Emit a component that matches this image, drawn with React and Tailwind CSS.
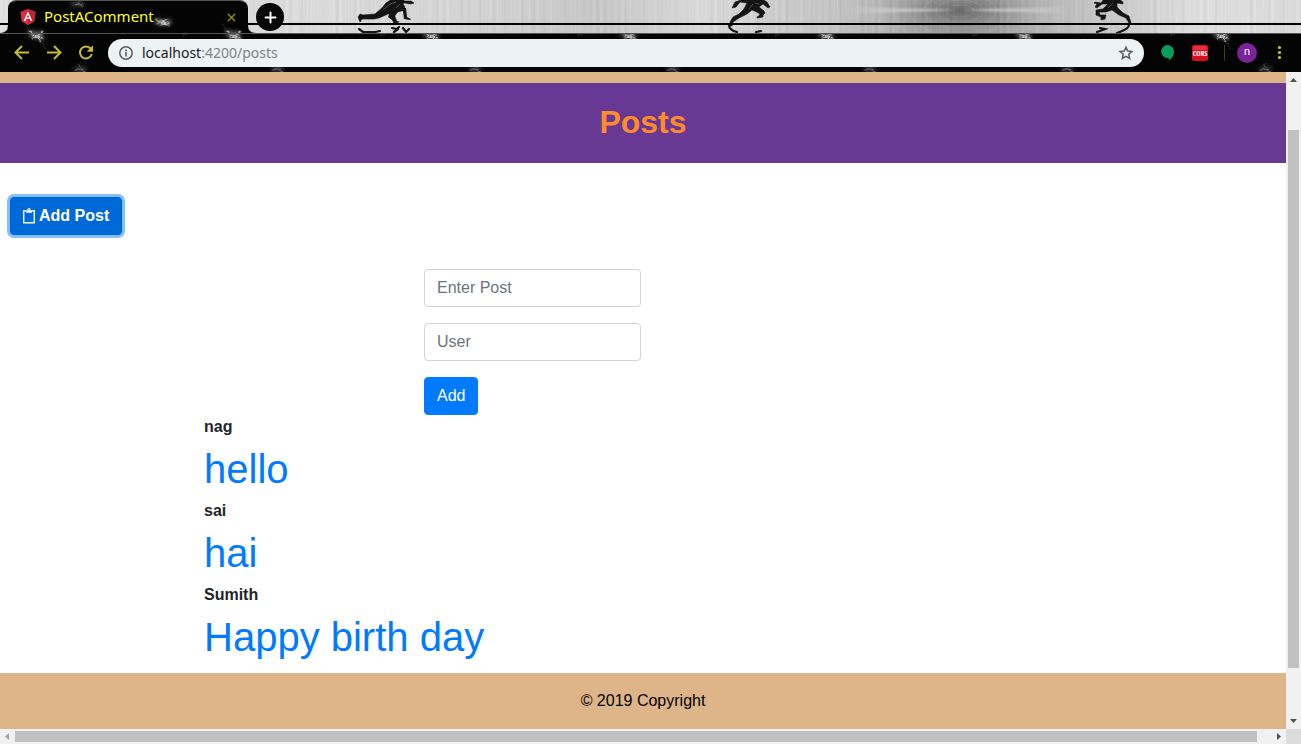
import React, { useState } from "react";
import { Plus, X } from "lucide-react";

const posts = [
  { user: "nag", text: "hello" },
  { user: "sai", text: "hai" },
  { user: "Sumith", text: "Happy birth day" },
];

function BrushedMetal() {
  return (
    <svg className="absolute inset-0 h-full w-full" viewBox="0 0 1301 33" preserveAspectRatio="xMinYMin slice" aria-hidden="true">
      <defs>
        <linearGradient id="metal" x1="0" x2="1">
          <stop offset="0" stopColor="#e2e2e2" />
          <stop offset="0.24" stopColor="#dcdcdc" />
          <stop offset="0.35" stopColor="#d4d4d4" />
          <stop offset="0.46" stopColor="#c4c4c4" />
          <stop offset="0.54" stopColor="#dadada" />
          <stop offset="0.65" stopColor="#bcbcbc" />
          <stop offset="0.74" stopColor="#8c8c8c" />
          <stop offset="0.83" stopColor="#bcbcbc" />
          <stop offset="0.92" stopColor="#e0e0e0" />
          <stop offset="1" stopColor="#dcdcdc" />
        </linearGradient>
        <radialGradient id="hub">
          <stop offset="0" stopColor="#4c4c4c" />
          <stop offset="0.3" stopColor="#686868" stopOpacity="0.9" />
          <stop offset="1" stopColor="#909090" stopOpacity="0" />
        </radialGradient>
        <linearGradient id="shineL" x1="0" x2="1">
          <stop offset="0" stopColor="#fff" stopOpacity="0" />
          <stop offset="1" stopColor="#fff" stopOpacity="0.8" />
        </linearGradient>
        <linearGradient id="shineR" x1="1" x2="0">
          <stop offset="0" stopColor="#fff" stopOpacity="0" />
          <stop offset="1" stopColor="#fff" stopOpacity="0.8" />
        </linearGradient>
        <filter id="grain" x="0" y="0" width="100%" height="100%">
          <feTurbulence type="fractalNoise" baseFrequency="0.28 0.001" numOctaves="2" seed="4" />
          <feColorMatrix values="1 0 0 0 0.15  1 0 0 0 0.15  1 0 0 0 0.15  0 0 0 0 0.2" />
        </filter>
        <filter id="soften" x="-10%" y="-100%" width="120%" height="300%">
          <feGaussianBlur stdDeviation="1.2" />
        </filter>
      </defs>
      <rect width="1301" height="33" fill="url(#metal)" />
      <ellipse cx="960" cy="11" rx="85" ry="28" fill="url(#hub)" />
      <g fill="none" stroke="#fff" strokeOpacity="0.1">
        <ellipse cx="960" cy="11" rx="14" ry="6" />
        <ellipse cx="960" cy="11" rx="24" ry="11" />
        <ellipse cx="960" cy="11" rx="36" ry="17" />
        <ellipse cx="960" cy="11" rx="50" ry="25" />
        <ellipse cx="960" cy="11" rx="66" ry="36" />
        <ellipse cx="960" cy="11" rx="84" ry="50" />
        <ellipse cx="960" cy="11" rx="104" ry="68" />
        <ellipse cx="960" cy="11" rx="126" ry="90" />
      </g>
      <rect width="1301" height="33" filter="url(#grain)" />
      <path d="M850 7L958 10 850 14z" fill="url(#shineL)" filter="url(#soften)" />
      <path d="M1070 7L962 10 1070 14z" fill="url(#shineR)" filter="url(#soften)" />
      <g stroke="#141414" fill="#141414" strokeWidth="0.6" strokeLinejoin="round">
        <path d="M358 17l2-3 3 1 12-1 7-6 4-5 6-4h12l-1 5 2 3-5 4-6 2-6 1-9 4-5 1-12 0-2 3z" />
        <path d="M390 8l6 1 6 1-1-3 5 1 1 9 4 2-1 1-6-1-1-8-5 1-3 4 2 5 3 1-6 2-2-4-4-3 2-5z" stroke="none" />
        <path d="M396 0l9 1h6l3 2-3 1-6-1-6 1z" />
        <path d="M744-1h18l5 3 3 5-2 1-5-4-4 3 5 4 1 2-2 2v2l-6 1 0-1 3-2-1-2-7-3-5 4-8 4-6 4-1 4h-2l0-4 3-5 6-3 5-5 3-6-7-1-4 5-4 1 3-6z" />
        <path d="M1104-1h15l4 3 0 2-6-1 0 4 6 6 6 3 2 7h-2l-3-5-7-3-7-5-6 2-7 0 1 3 6 0-1 4-4 1 0-3-5-2 0-5 7-1 5-5-6 0-5 4-2-1 2-3-3-1 1-1 6 1z" />
      </g>
      <g fill="none" stroke="#c9c9c9" strokeWidth="0.6" opacity="0.55">
        <path d="M383 10l7-6 6-2M396 8l4-4M749 9l4-5M755 3l4 1M1108 8l5-5" />
      </g>
      <g fill="none" stroke="#161616" strokeWidth="2.200" strokeLinecap="round">
        <path d="M359 29l4 3h12l5-1M392 28l5 1 2-2M394 32l4-3M403 28l3 4 3-3" />
        <path d="M729 25q0 5 8 7M756 32l5-1" />
        <path d="M1100 28l5 1-8 3M1129 25q0 4-12 8" />
      </g>
      <path d="M0 24h1301" stroke="#000" strokeWidth="2" />
    </svg>
  );
}

function StormTexture() {
  return (
    <svg className="absolute inset-0 h-full w-full" aria-hidden="true">
      <defs>
        <filter id="glow" x="-40%" y="-40%" width="180%" height="180%">
          <feGaussianBlur stdDeviation="2" />
        </filter>
        <filter id="rough" x="-20%" y="-20%" width="140%" height="140%">
          <feTurbulence type="fractalNoise" baseFrequency="0.3" numOctaves="3" seed="8" />
          <feDisplacementMap in="SourceGraphic" scale="5" xChannelSelector="R" yChannelSelector="G" />
          <feGaussianBlur stdDeviation="0.4" />
        </filter>
        <pattern id="storm" width="197.500" height="72" patternUnits="userSpaceOnUse">
          <rect width="198" height="72" fill="#040404" />
          <g fill="none" stroke="#fff" strokeLinecap="round">
            <g filter="url(#glow)" strokeWidth="5">
              <path d="M31 34l5 2 4-1 1 3M157 22l6 2 6-1" opacity="0.45" />
              <path d="M73 5h8M76 70l8-1" opacity="0.22" />
            </g>
            <g filter="url(#rough)" strokeWidth="1.2">
              <path d="M29 32l4 3 5 1 3-1 2-3M34 36l4 2 3 3M32 38l6-1 4 1M156 20l4 3 6-2M157 24l7 0 5 3M162 21l4 4 4-1M160 26l5-1" opacity="0.65" />
              <path d="M74 6l6-1 3 2M78 5l1-3M76 70l5-1 5 2M79 69l1-4" opacity="0.3" />
              <path d="M28 31l-2-6M41 42l4 6M101 11l5 3M122 65l4-2M183 36l3-2M142 52l4 3" opacity="0.13" />
            </g>
          </g>
        </pattern>
      </defs>
      <rect width="100%" height="100%" fill="url(#storm)" />
    </svg>
  );
}

function ChromeTab() {
  return (
    <div className="relative ml-2 h-[33px] w-60 shrink-0">
      <div className="relative flex h-full items-center overflow-hidden rounded-t-lg border-t border-[#555] pl-3 pr-2.5">
        <div className="absolute -left-2 -top-0.5 h-[72px] w-[260px]"><StormTexture /></div>
        <svg className="relative h-4 w-4 shrink-0" viewBox="0 0 16 16" aria-hidden="true">
          <path d="M8 0l7.500 2.700-1.200 9.700L8 16l-6.300-3.600L.5 2.700z" fill="#dd2c3e" />
          <path d="M8 0l7.500 2.700-1.200 9.700L8 16z" fill="#bd2636" />
          <path d="M8 2.300L3.700 12h1.700l.9-2.200h3.500l.9 2.200h1.600zm0 3.200l1.300 3H6.700z" fill="#fff" />
        </svg>
        <span className="relative ml-2 flex-1 whitespace-nowrap pb-0.5 font-['Noto_Sans',sans-serif] text-[15px] leading-5 text-[#ffff28]">PostAComment</span>
        <button aria-label="Close tab" className="relative text-[#938d20]"><X size={13} strokeWidth={2.6} /></button>
      </div>
      <svg className="absolute -left-2 bottom-0 h-2 w-2" viewBox="0 0 8 8" aria-hidden="true"><path d="M8 0v8H0q8 0 8-8" fill="#080808" /></svg>
      <svg className="absolute -right-2 bottom-0 h-2 w-2" viewBox="0 0 8 8" aria-hidden="true"><path d="M0 0v8h8Q0 8 0 0" fill="#080808" /></svg>
    </div>
  );
}

function BrowserChrome() {
  return (
    <header className="shrink-0 bg-black">
      <div className="relative flex h-[33px] overflow-hidden">
        <BrushedMetal />
        <ChromeTab />
        <button aria-label="New tab" className="relative ml-2 mt-[3px] flex h-7 w-7 items-center justify-center rounded-full bg-[#080808] text-white">
          <Plus size={17} strokeWidth={2.8} />
        </button>
      </div>
      <div className="relative h-[39px] overflow-hidden border-t border-[#555]">
        <div className="absolute inset-x-0 -top-[34px] h-[72px]"><StormTexture /></div>
        <div className="relative flex h-full items-center">
          <nav className="flex w-[108px] shrink-0 items-center gap-4 pl-3.5 text-[#c4bc2e]">
            <button aria-label="Back">
              <svg className="h-4 w-4" viewBox="0 0 16 16" fill="none" stroke="currentColor" strokeWidth="2"><path d="M15 7.500H2M8 1L1.500 7.500 8 14" /></svg>
            </button>
            <button aria-label="Forward">
              <svg className="h-4 w-4" viewBox="0 0 16 16" fill="none" stroke="currentColor" strokeWidth="2"><path d="M1 7.500h13M8 1l6.500 6.500L8 14" /></svg>
            </button>
            <button aria-label="Reload">
              <svg className="h-4 w-4" viewBox="0 0 16 16"><path d="M12.700 3.700A6 6 0 1 0 13.800 9" fill="none" stroke="currentColor" strokeWidth="2" /><path d="M15 .3v6.500H8.700z" fill="currentColor" /></svg>
            </button>
          </nav>
          <div className="flex h-7 min-w-0 flex-1 items-center rounded-full bg-[#edf2f4] pl-2.5 pr-2.5">
            <svg className="h-4 w-4 shrink-0" viewBox="0 0 16 16" aria-hidden="true">
              <circle cx="8" cy="8" r="6.200" fill="none" stroke="#5a5f63" strokeWidth="1.500" />
              <path d="M8 7v4.500M8 4.500V6" stroke="#5a5f63" strokeWidth="1.600" />
            </svg>
            <span className="ml-2 flex-1 font-['Noto_Sans',sans-serif] text-sm leading-5 text-[#7e8386]"><span className="text-[#202124]">localhost</span>:4200/posts</span>
            <button aria-label="Bookmark this page">
              <svg className="h-4 w-4" viewBox="0 0 16 16" fill="none" stroke="#5a5f63" strokeWidth="1.500"><path d="M8 2.200l1.700 3.900 4.200.4-3.200 2.800 1 4.200L8 11.300l-3.700 2.200 1-4.200-3.200-2.800 4.200-.4z" /></svg>
            </button>
          </div>
          <div className="flex shrink-0 items-center pl-4 pr-3">
            <svg className="h-4 w-4" viewBox="0 0 16 16" aria-hidden="true"><path d="M7.500 0a6.500 6.500 0 0 1 6.500 6.500c0 4-2.300 7-5.200 9v-2.600A6.500 6.500 0 1 1 7.500 0" fill="#0a9d58" /></svg>
            <svg className="ml-4 h-4 w-4" viewBox="0 0 16 16" role="img" aria-label="CORS">
              <rect width="16" height="16" rx="2.500" fill="#d90f20" />
              <rect x="1" y="1" width="14" height="4" rx="1.500" fill="#e8303c" />
              <text x="8" y="11" textAnchor="middle" fontFamily="Open Sans Condensed, Liberation Sans Narrow, sans-serif" fontSize="7.500" fontWeight="700" fill="#fff">CORS</text>
            </svg>
            <span className="ml-2 h-4 w-[9px] border-r border-[#453d10]" />
            <button aria-label="Profile" className="ml-3 flex h-5 w-5 items-center justify-center rounded-full bg-[#7b239b] pb-0.5 font-['Roboto',sans-serif] text-[11px] leading-4 text-white">n</button>
            <button aria-label="Browser menu" className="ml-4">
              <svg className="h-4 w-4" viewBox="0 0 16 16" fill="#cdc42f"><circle cx="6.500" cy="2.500" r="1.600" /><circle cx="6.500" cy="7.500" r="1.600" /><circle cx="6.500" cy="12.500" r="1.600" /></svg>
            </button>
          </div>
        </div>
      </div>
    </header>
  );
}

function Page() {
  const [post, setPost] = useState("");
  const [user, setUser] = useState("");
  const field = "h-[38px] w-[217px] rounded border border-[#ced4da] bg-white px-3 text-base text-[#495057] placeholder:text-[#6c757d] placeholder:opacity-100 outline-none";
  return (
    <div className="flex min-w-0 flex-1 flex-col bg-white font-['Liberation_Sans',Arial,sans-serif] text-base text-[#212529]">
      <div className="h-[11px] bg-[#deb589]" />
      <div className="flex h-20 items-center justify-center bg-[#673894] pb-0.5">
        <h1 className="text-[32px] font-bold leading-10 text-[#ff8a2c]">Posts</h1>
      </div>
      <main className="flex-1 pt-[34px]">
        <button className="ml-2.5 flex h-[38px] items-center gap-1 rounded border border-[#0062cc] bg-[#0069d9] pl-3 pr-3 font-bold text-white ring-3 ring-[#80c0ff]">
          <svg className="h-4 w-3" viewBox="0 0 12 16" aria-hidden="true">
            <path d="M3.500 2.700H.7v12h10.600v-12H8.500" fill="none" stroke="#fff" strokeWidth="1.400" strokeLinejoin="round" />
            <path d="M3 4.700V2.400h1.300Q4.400 0 6 0t1.700 2.400H9v2.300z" fill="#fff" />
            <circle cx="6" cy="1.800" r=".6" fill="#0069d9" />
          </svg>
          Add Post
        </button>
        <form className="ml-[424px] mt-[34px] flex flex-col items-start gap-4" onSubmit={(e) => e.preventDefault()}>
          <input aria-label="Enter Post" placeholder="Enter Post" value={post} onChange={(e) => setPost(e.target.value)} className={field} />
          <input aria-label="User" placeholder="User" value={user} onChange={(e) => setUser(e.target.value)} className={field} />
          <button className="h-[38px] rounded border border-[#007bff] bg-[#007bff] px-3 text-white">Add</button>
        </form>
        <div className="ml-[204px] flex flex-col gap-1.5">
          {posts.map((p) => (
            <article key={p.user}>
              <p className="font-bold leading-6">{p.user}</p>
              <h2 className="mt-1.5 text-[40px] leading-[48px]"><a href="#post" className="text-[#007bff]">{p.text}</a></h2>
            </article>
          ))}
        </div>
      </main>
      <footer className="flex h-14 items-center justify-center bg-[#deb589] text-black">© 2019 Copyright</footer>
    </div>
  );
}

export default function App() {
  return (
    <div className="flex min-h-screen flex-col">
      <BrowserChrome />
      <div className="flex flex-1">
        <Page />
        <div className="flex w-[15px] shrink-0 flex-col items-center justify-between bg-[#f1f1f1]" aria-hidden="true">
          <svg className="h-[15px] w-[15px]" viewBox="0 0 15 15"><path d="M4 10l3.500-4L11 10z" fill="#505050" /></svg>
          <div className="flex w-full flex-1 flex-col items-center pb-[46px] pt-[43px]"><div className="w-[11px] flex-1 bg-[#c1c1c1]" /></div>
          <svg className="h-[15px] w-[15px]" viewBox="0 0 15 15"><path d="M4 5l3.500 4L11 5z" fill="#505050" /></svg>
        </div>
      </div>
      <div className="flex h-[15px] shrink-0 bg-[#f1f1f1]" aria-hidden="true">
        <svg className="h-[15px] w-[15px]" viewBox="0 0 15 15"><path d="M9 4L5 7.500 9 11z" fill="#a3a3a3" /></svg>
        <div className="my-0.5 mr-3.5 flex-1 bg-[#c1c1c1]" />
        <svg className="h-[15px] w-[15px]" viewBox="0 0 15 15"><path d="M6 4l4 3.500L6 11z" fill="#505050" /></svg>
        <div className="w-[15px] bg-[#dcdcdc]" />
      </div>
    </div>
  );
}
